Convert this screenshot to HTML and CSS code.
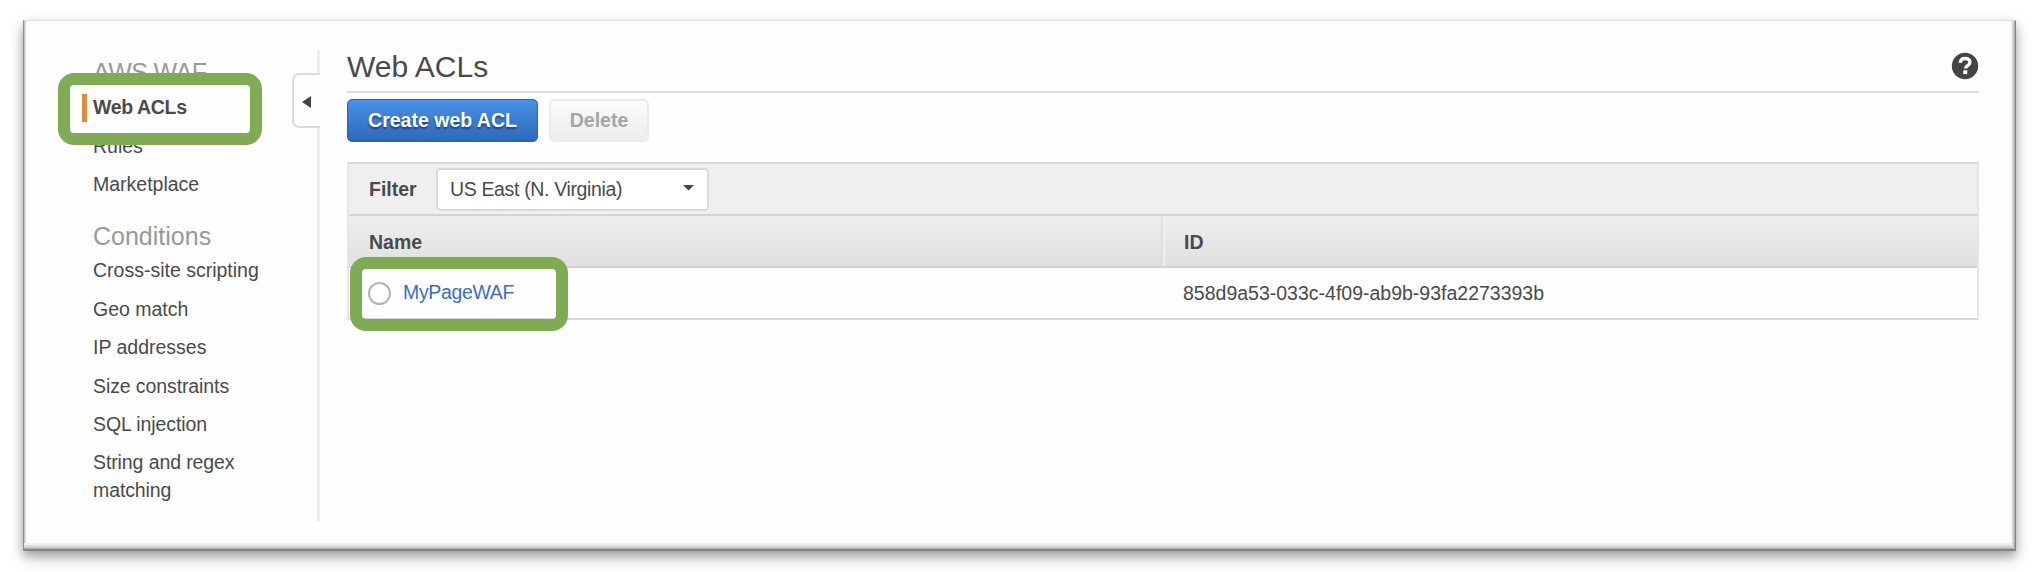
FILE: index.html
```html
<!DOCTYPE html>
<html lang="en">
<head>
<meta charset="utf-8">
<title>AWS WAF - Web ACLs</title>
<link rel="stylesheet" href="styles.css">
</head>
<body>
<div class="frame">
  <nav class="sidebar">
    <h2 class="group-title product">AWS WAF</h2>
    <ul class="links">
      <li class="active">Web ACLs</li>
      <li>Rules</li>
      <li>Marketplace</li>
    </ul>
    <h2 class="group-title conditions">Conditions</h2>
    <ul class="links">
      <li>Cross-site scripting</li>
      <li>Geo match</li>
      <li>IP addresses</li>
      <li class="tight">Size constraints</li>
      <li class="tight">SQL injection</li>
      <li class="tight">String and regex<br>matching</li>
    </ul>
  </nav>
  <div class="divider">
    <span class="rail rail-top"></span>
    <button class="collapse" aria-label="Collapse"><svg width="9" height="12" viewBox="0 0 9 12"><path d="M0 6 9 0V12Z" fill="#444"/></svg></button>
    <span class="rail rail-bottom"></span>
  </div>
  <main class="main">
    <header class="page-head">
      <h1>Web ACLs</h1>
      <svg class="help" width="28" height="28" viewBox="0 0 28 28"><circle cx="14" cy="14" r="13.2" fill="#444"/><path d="M9.3 10.8C9.5 7.8 11.4 6.5 14 6.5c2.900 0 4.900 1.500 4.900 3.900 0 3.200-4.500 3.100-4.500 6.200" fill="none" stroke="#fff" stroke-width="3.300"/><rect x="12.300" y="18.300" width="4" height="3.800" fill="#fff"/></svg>
    </header>
    <div class="actions">
      <button class="btn primary">Create web ACL</button>
      <button class="btn disabled">Delete</button>
    </div>
    <section class="table">
      <div class="filter">
        <span class="filter-label">Filter</span>
        <div class="select"><span>US East (N. Virginia)</span><svg width="11" height="6" viewBox="0 0 11 6"><path d="M0 0H11L5.500 5.500Z" fill="#444"/></svg></div>
      </div>
      <div class="row head"><div class="cell">Name</div><div class="cell">ID</div></div>
      <div class="row"><div class="cell"><span class="radio"></span><a class="name">MyPageWAF</a></div><div class="cell id">858d9a53-033c-4f09-ab9b-93fa2273393b</div></div>
    </section>
  </main>
</div>
<div class="highlight mark-nav"></div>
<div class="highlight mark-row"></div>
</body>
</html>
```
FILE: styles.css
```css
* { box-sizing: border-box; }
body {
  margin: 0;
  padding: 20px 22px 21px 23px;
  height: 572px;
  overflow: hidden;
  background: #fff;
  font-family: "Liberation Sans", Arial, sans-serif;
  font-size: 19.5px;
  color: #4a4a4a;
}
h1, h2, ul { margin: 0; padding: 0; font-weight: normal; }
.frame {
  display: flex;
  height: 531px;
  background: #fefefe;
  border: solid;
  border-width: 1px 1px 2px 1px;
  border-color: #dedede #858585 #858585 #8e8e8e;
  box-shadow:
    inset -1px -1px #b0b0b0, inset -2px -2px #cacaca, inset -3px -4px #dedede, inset -4px -6px #f0f0f0,
    inset 1px 0 #c4c4c4, inset 2px 0 #e4e4e4, inset 3px 0 #f4f4f4,
    0 7px 14px rgba(0,0,0,.26), 0 4px 8px rgba(0,0,0,.18);
}
.sidebar { width: 268px; padding: 35.700px 0 0 69px; }
.group-title { font-size: 25px; line-height: 30px; color: #999; margin-bottom: 6.500px; }
.product { letter-spacing: -0.6px; margin-bottom: 7.500px; }
.group-title.conditions { margin-top: 22.500px; }
.links { list-style: none; line-height: 27.500px; display: flex; flex-direction: column; gap: 10.900px; }
.tight { letter-spacing: -0.1px; }
.active {
  font-weight: bold;
  letter-spacing: -0.35px;
  margin-left: -11px;
  padding-left: 6px;
  border-left: 5px solid #df8b3c;
}
.divider { width: 28px; padding-top: 29px; display: flex; flex-direction: column; align-items: flex-end; }
.rail { width: 3px; background: #ededed; }
.rail-top { height: 23px; }
.rail-bottom { height: 393px; }
.collapse {
  width: 28px; height: 55px;
  border: 2px solid #dcdcdc;
  border-right: 0;
  border-radius: 7px 0 0 7px;
  background: #fefefe;
  padding: 2px 1px 0 0;
  display: flex; align-items: center; justify-content: center;
}
.main { width: 1632px; margin-left: 27px; }
.page-head {
  height: 72px;
  padding-top: 21px;
  border-bottom: 2px solid #dedede;
  display: flex; justify-content: space-between; align-items: center;
}
h1 { font-size: 30px; line-height: 34px; }
.help { margin-top: -1px; }
.actions { display: flex; gap: 11px; padding-top: 6px; }
.btn {
  height: 43px;
  padding: 0;
  border-radius: 5px;
  font: bold 19.500px "Liberation Sans", Arial, sans-serif;
}
.primary {
  width: 191px;
  color: #fff;
  border: 1px solid #2a62ad;
  background: linear-gradient(#4a90e6, #2e69b9);
  text-shadow: 0 2px 2px rgba(0,0,0,.45);
}
.disabled {
  width: 100px;
  color: #a5a5a5;
  border: 2px solid #ebebeb;
  background: linear-gradient(#fcfcfc, #ececec);
}
.table { margin-top: 20px; border: 2px solid; border-color: #dadada #e6e6e6; height: 158px; }
.filter {
  height: 50px;
  padding: 0 20px;
  background: #efefef;
  display: flex; align-items: center;
}
.filter-label { width: 67px; font-weight: bold; padding-top: 1px; }
.select {
  width: 273px; height: 43px;
  padding: 1px 13px 0 12px;
  letter-spacing: -0.35px;
  background: #fff;
  border: 2px solid #dadada;
  border-radius: 5px;
  display: flex; align-items: center; justify-content: space-between;
}
.select svg { margin-top: -4px; }
.row { display: grid; grid-template-columns: 814px 1fr; height: 50px; }
.cell { padding-left: 20px; display: flex; align-items: center; }
.cell:first-child { padding-bottom: 1px; }
.head {
  height: 54px;
  font-weight: bold;
  border: solid #d4d4d4;
  border-width: 2px 0;
  background: linear-gradient(#eee, #e0e0e0);
}
.head .cell { padding-top: 2px; }
.head .cell:first-child { padding-bottom: 0; border-right: 2px solid #dedede; }
.head .cell + .cell { border-left: 2px solid #f0f0f0; padding-left: 19px; }
.radio { width: 23px; height: 23px; margin: 2px 12px 0 -1px; border: 2px solid #b5b5b5; border-radius: 50%; background: #fff; }
.name { color: #3b6fbd; letter-spacing: -0.35px; }
.highlight { position: absolute; border: 12px solid #7fab55; border-radius: 16px; }
.mark-nav { left: 58px; top: 73px; width: 204px; height: 72px; }
.mark-row { left: 350px; top: 257px; width: 218px; height: 74px; }
```
